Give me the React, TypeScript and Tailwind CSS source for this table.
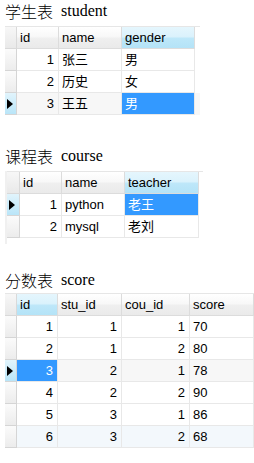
type Col = { label: string; width: number; right?: boolean }
type Row = { cells: string[]; current?: boolean; bg?: string }

type TableProps = {
  left: number
  rowHead: number
  cols: Col[]
  rows: Row[]
  selCol: number
  selCell: [number, number]
  tail: number
  strip?: boolean
}

const cjk = { fontFamily: '"Liberation Sans", "Noto Sans CJK SC", sans-serif' }

function Title({ zh, en }: { zh: string; en: string }) {
  return (
    <div className="flex h-[20px] items-center pl-[5px] text-[16px] leading-[20px] text-black">
      <span style={{ fontFamily: '"Noto Sans CJK SC", sans-serif' }} className="font-light">
        {zh}
      </span>
      <span className="ml-[8px]" style={{ fontFamily: '"Liberation Serif", serif' }}>
        {en}
      </span>
    </div>
  )
}

function Triangle() {
  return (
    <svg width="6" height="10" viewBox="0 0 6 10" className="ml-[2px]">
      <path d="M0 0 L6 5 L0 10 Z" fill="#000" />
    </svg>
  )
}

function Grid({ left, rowHead, cols, rows, selCol, selCell, tail, strip }: TableProps) {
  const total = rowHead + cols.reduce((s, c) => s + c.width, 0)
  return (
    <div className="flex" style={{ marginLeft: strip ? 5 : left }}>
      {strip && <div className="w-[2px] bg-[#f0f0f0]" />}
      <div style={{ width: total + tail }} className="border-t border-[#e6e6e6]">
        {/* header */}
        <div className="flex h-[22px]">
          <div
            style={{ width: rowHead }}
            className="border-r border-b border-[#d9d9d9] bg-gradient-to-b from-[#f7f7f7] to-[#e9e9e9]"
          />
          {cols.map((c, i) => (
            <div
              key={c.label}
              style={{ width: c.width }}
              className={`flex items-center border-r border-b border-[#dcdcdc] pl-[3px] text-[13px] text-black ${
                i === selCol
                  ? 'bg-[linear-gradient(#e5f6fd_0%,#dbf2fc_45%,#bde7f9_55%,#b4e3f7_100%)]'
                  : 'bg-[linear-gradient(#ffffff_0%,#f8f8f8_45%,#efefef_55%,#eaeaea_100%)]'
              }`}
            >
              <span style={cjk}>{c.label}</span>
            </div>
          ))}
        </div>
        {/* rows */}
        {rows.map((r, ri) => (
          <div key={ri} className="flex h-[22px]" style={{ background: r.bg ?? '#ffffff' }}>
            <div
              style={{ width: rowHead }}
              className={`flex items-center border-r border-b border-[#d5d5d5] ${
                r.current
                  ? 'bg-gradient-to-b from-[#e1f4fc] to-[#b9e5f8]'
                  : 'bg-gradient-to-b from-[#fbfbfb] to-[#ececec]'
              }`}
            >
              {r.current && <Triangle />}
            </div>
            {cols.map((c, ci) => {
              const sel = selCell[0] === ri && selCell[1] === ci
              return (
                <div
                  key={ci}
                  style={{ width: c.width, ...cjk }}
                  className={`flex items-center border-r border-b border-[#e8e8e8] text-[13px] ${
                    c.right ? 'justify-end pr-[4px]' : 'pl-[3px]'
                  } ${sel ? 'bg-[#3399ff] text-white' : 'text-black'}`}
                >
                  {r.cells[ci]}
                </div>
              )
            })}
          </div>
        ))}
        {strip && <div className="h-[6px] bg-white" />}
      </div>
    </div>
  )
}

export default function App() {
  return (
    <div className="h-[463px] w-[254px] overflow-hidden bg-white pt-[1px]">
      <Title zh="学生表" en="student" />
      <div className="mt-[5px]">
        <Grid
          left={5}
          rowHead={12}
          cols={[
            { label: 'id', width: 42, right: true },
            { label: 'name', width: 63 },
            { label: 'gender', width: 73 },
          ]}
          rows={[
            { cells: ['1', '张三', '男'] },
            { cells: ['2', '历史', '女'] },
            { cells: ['3', '王五', '男'], current: true, bg: '#f7f7f7' },
          ]}
          selCol={2}
          selCell={[2, 2]}
          tail={5}
        />
      </div>

      <div className="mt-[31px]">
        <Title zh="课程表" en="course" />
      </div>
      <div className="mt-[5px]">
        <Grid
          left={7}
          rowHead={13}
          cols={[
            { label: 'id', width: 42, right: true },
            { label: 'name', width: 63 },
            { label: 'teacher', width: 74 },
          ]}
          rows={[
            { cells: ['1', 'python', '老王'], current: true },
            { cells: ['2', 'mysql', '老刘'] },
          ]}
          selCol={2}
          selCell={[0, 2]}
          tail={4}
          strip
        />
      </div>

      <div className="mt-[26px]">
        <Title zh="分数表" en="score" />
      </div>
      <div className="mt-[3px]">
        <Grid
          left={5}
          rowHead={12}
          cols={[
            { label: 'id', width: 41, right: true },
            { label: 'stu_id', width: 64, right: true },
            { label: 'cou_id', width: 68, right: true },
            { label: 'score', width: 64 },
          ]}
          rows={[
            { cells: ['1', '1', '1', '70'] },
            { cells: ['2', '1', '2', '80'] },
            { cells: ['3', '2', '1', '78'], current: true, bg: '#f7f7f7' },
            { cells: ['4', '2', '2', '90'] },
            { cells: ['5', '3', '1', '86'] },
            { cells: ['6', '3', '2', '68'], bg: '#f3f8fc' },
          ]}
          selCol={0}
          selCell={[2, 0]}
          tail={0}
        />
      </div>
    </div>
  )
}
